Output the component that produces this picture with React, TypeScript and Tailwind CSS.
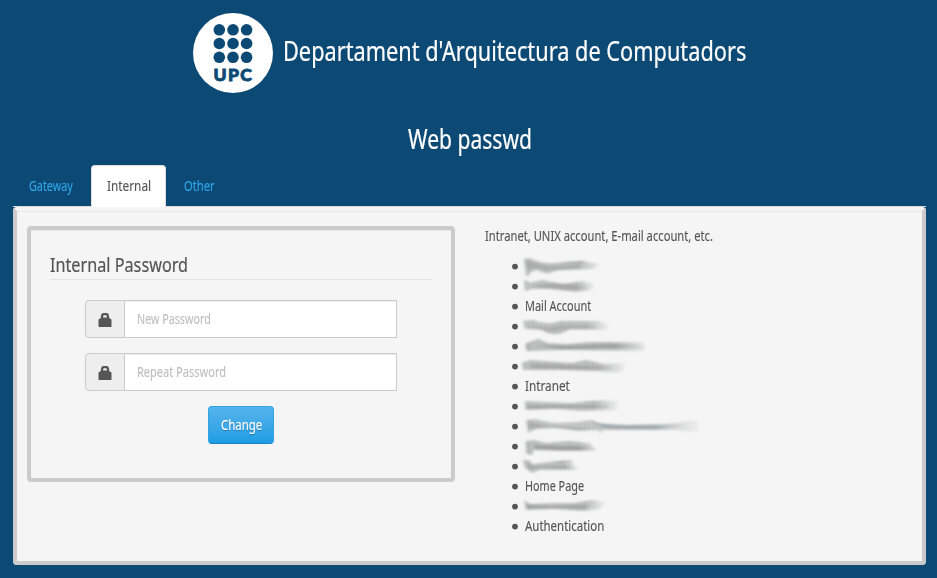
import { useLayoutEffect, useRef } from "react";

type FitProps = { width: number; className?: string; children: string };

/* Condensed text: squeezes a normal-width face into the given width. */
function Fit({ width, className = "", children }: FitProps) {
  const ref = useRef<HTMLSpanElement>(null);
  useLayoutEffect(() => {
    const el = ref.current;
    if (el) el.style.transform = `scaleX(${width / el.offsetWidth})`;
  }, [width]);
  return (
    <span className="inline-block whitespace-nowrap" style={{ width }}>
      <span ref={ref} className={`inline-block origin-left ${className}`}>
        {children}
      </span>
    </span>
  );
}

type Stroke = { d: string; o: number; c?: string };
type Item = { text: string; width: number } | { strokes: Stroke[] };

const items: Item[] = [
  {
    strokes: [
      { d: "M4 3Q10 1 16 5Q28 9 44 6L62 5L80 8L74 13L46 14Q34 14 30 17Q23 18 17 14L11 16L8 20L6 20Z", o: 0.42 },
      { d: "M6 4L14 7L30 11L60 9L60 12L30 14L14 12L7 14Z", o: 0.26 },
      { d: "M40 7L66 5L61 7Z", o: 0.45 },
    ],
  },
  {
    strokes: [
      { d: "M4 5L7 4L9 7L22 4L43 8L62 5L75 8L72 14L56 16L30 13L12 13L5 15Z", o: 0.4 },
      { d: "M12 10L34 7L66 9L68 14L50 14L26 12Z", o: 0.3 },
    ],
  },
  { text: "Mail Account", width: 66.5 },
  {
    strokes: [
      { d: "M3 5L13 4Q26 10 40 5L78 5L89 9L87 14L50 13Q42 19 34 18Q27 18 22 14L5 13Z", o: 0.4 },
      { d: "M5 9L26 11L42 9L76 9L76 13L42 14L30 16Z", o: 0.22 },
    ],
  },
  {
    strokes: [
      { d: "M6 7L18 3L28 7L46 8L70 6L122 6L127 12L124 15L44 14L7 15Z", o: 0.42 },
      { d: "M16 9L50 10L90 8L122 9L122 12L86 12L40 13Z", o: 0.42 },
      { d: "M6 8L8 8L9 14L6 14Z", o: 0.4 },
    ],
  },
  {
    strokes: [
      { d: "M2 7L10 4L52 7L66 4L84 8L105 7L104 15L70 15L40 14L3 14Z", o: 0.42 },
      { d: "M10 8L44 9L90 11L92 13L50 13L12 12Z", o: 0.33 },
      { d: "M30 16L33 16L32 17Z M76 16L100 15L99 17Z", o: 0.4 },
    ],
  },
  { text: "Intranet", width: 44.5 },
  {
    strokes: [
      { d: "M5 5L50 7L72 5L99 5L97 14L60 15L36 13L5 14Z", o: 0.38 },
      { d: "M6 9L40 9L88 9L89 12L34 12L8 13Z", o: 0.36 },
      { d: "M60 6L90 4L80 7Z", o: 0.25 },
    ],
  },
  {
    strokes: [
      { d: "M6 4L14 3L34 7L58 6L72 4L80 8L110 9L146 8L179 4L178 16L154 14L128 14L100 14L76 14L60 15L36 12L16 13L8 17Z", o: 0.36 },
      { d: "M8 5L28 10L72 12L56 14L28 11L8 13Z", o: 0.3 },
      { d: "M72 6L96 9L120 9L164 9L140 13L104 13L84 12Z", o: 0.45, c: "#7a8f98" },
      { d: "M76 11L84 17L80 16Z", o: 0.4 },
    ],
  },
  {
    strokes: [
      { d: "M6 5L14 4L26 7L48 5L70 7L78 15L42 15L14 14L12 19L7 18Z", o: 0.42 },
      { d: "M14 9L40 10L70 10L76 14L34 14L15 13Z", o: 0.42 },
      { d: "M6 6L8 6L8 18L6 18Z", o: 0.3 },
    ],
  },
  {
    strokes: [
      { d: "M3 4L9 4L13 8L28 6L52 4L54 10L60 14L36 14L20 14L12 17L5 12Z", o: 0.38 },
      { d: "M5 6L14 10L46 9L54 13L22 12L9 14Z", o: 0.3 },
      { d: "M30 6L52 4.5L40 7Z", o: 0.4 },
    ],
  },
  { text: "Home Page", width: 59 },
  {
    strokes: [
      { d: "M4 4L10 8L34 7L54 7L72 4L86 6L80 13L64 15L34 13L6 14Z", o: 0.4 },
      { d: "M6 8L30 10L58 9L74 9L64 13L30 12L7 13Z", o: 0.36 },
      { d: "M60 7L78 5L72 7Z", o: 0.35 },
    ],
  },
  { text: "Authentication", width: 79 },
];

/* Smeared-out list entry that thins out to the right, with a fine vertical grain. */
function Smudge({ strokes }: { strokes: Stroke[] }) {
  return (
    <svg className="block h-5 w-[180px] overflow-visible" viewBox="0 0 180 20">
      <g mask="url(#trail)">
        <g filter="url(#soften)">
          {strokes.map((s, i) => (
            <path key={i} d={s.d} fill={s.c ?? "#777a7a"} fillOpacity={s.o} />
          ))}
        </g>
        <path d={strokes[0].d} fill="url(#grain)" filter="url(#fine)" />
      </g>
    </svg>
  );
}

function Logo() {
  const at = [26.3, 40, 53.6];
  return (
    <svg className="size-20 shrink-0" viewBox="0 0 80 80">
      <circle cx="40" cy="40" r="40" fill="#fff" />
      {[16.8, 30.5, 44.3].map((y) =>
        at.map((x) => <circle key={`${x}-${y}`} cx={x} cy={y} r="5.8" fill="#0c4a75" />)
      )}
      <text
        x="20.6"
        y="67.8"
        textLength="38.2"
        className="font-['Lato',sans-serif] text-[17.5px] font-black"
        fill="#0c4a75"
        stroke="#0c4a75"
        strokeWidth="0.9"
      >
        UPC
      </text>
    </svg>
  );
}

function PasswordField({ label, width }: { label: string; width: number }) {
  return (
    <label className="mx-auto flex h-[38px] w-[312px]">
      <span className="flex w-10 items-center justify-center rounded-l border border-[#cbcbcb] bg-[#eee] pt-px pr-px">
        <svg className="size-[14px]" viewBox="0 0 14 14">
          <path
            d="M2.8 5V4Q3 0 5.5 0H8.5Q11 0 11.2 4V5L13.5 6.5V13.5L13 14H1L.5 13.5V6.5ZM5.2 4.6H8.8V3.2Q8.8 2.2 8 2.2H6Q5.2 2.2 5.2 3.2Z"
            fill="#555"
            fillRule="evenodd"
          />
        </svg>
      </span>
      <span className="flex flex-1 items-center border border-l-0 border-[#cbcbcb] bg-white pb-0.5 pl-3 text-[#bfbfbf] shadow-[inset_0_1px_1px_rgba(0,0,0,0.075)]">
        <Fit width={width}>{label}</Fit>
      </span>
    </label>
  );
}

export default function App() {
  return (
    <div className="h-[578px] w-[937px] overflow-hidden bg-[#0c4a75] px-[13px] pt-[13px] font-['Noto_Sans','Open_Sans',sans-serif] text-[14.5px] leading-5 text-[#555] [-webkit-text-stroke:0.15px_currentColor]">
      <svg className="absolute size-0">
        <defs>
          <filter id="soften" x="-10%" y="-30%" width="120%" height="160%">
            <feGaussianBlur stdDeviation="1.8 1.1" />
          </filter>
          <filter id="fine">
            <feGaussianBlur stdDeviation="0.4 1" />
          </filter>
          <pattern id="grain" width="2" height="20" patternUnits="userSpaceOnUse">
            <rect width="1" height="20" fill="#888" fillOpacity="0.12" />
          </pattern>
          <linearGradient id="fade">
            <stop offset="0.76" stopColor="#fff" />
            <stop offset="1" stopColor="#fff" stopOpacity="0.15" />
          </linearGradient>
          <mask
            id="trail"
            maskContentUnits="objectBoundingBox"
            x="-0.1"
            y="-0.3"
            width="1.2"
            height="1.6"
          >
            <rect x="-0.1" y="-0.3" width="1.1" height="1.6" fill="url(#fade)" />
          </mask>
        </defs>
      </svg>

      <header className="flex h-20 pl-[180px] text-[26.5px] leading-10 text-white [-webkit-text-stroke:0.2px_currentColor]">
        <Logo />
        <h1 className="ml-[9.5px] pt-[18px]">
          <Fit width={463.5}>Departament d'Arquitectura de Computadors</Fit>
        </h1>
      </header>
      <h2 className="mt-[26px] h-[46px] pl-[394.5px] text-[26.5px] leading-10 text-white [-webkit-text-stroke:0.2px_currentColor]">
        <Fit width={124}>Web passwd</Fit>
      </h2>

      <nav className="flex h-[41px] text-[#2fa4e7]">
        <a className="w-[78px] pt-[10px] pl-4">
          <Fit width={44}>Gateway</Fit>
        </a>
        <a className="-mb-px h-[42px] w-[75px] rounded-t border border-b-0 border-[#ddd] bg-white pt-[9px] pl-[15px] text-[#555]">
          <Fit width={44}>Internal</Fit>
        </a>
        <a className="pt-[10px] pl-[18px]">
          <Fit width={31}>Other</Fit>
        </a>
      </nav>

      <div className="h-px w-[913px] bg-[#ddd]">
        <div className="ml-[78px] h-px w-[75px] bg-white" />
      </div>
      <main className="flex h-[358px] w-[913px] rounded border-4 border-[#cbcbcb] border-t-[#f5f5f5] bg-[#f5f5f5] pl-[10px] shadow-[inset_0_1px_1px_rgba(0,0,0,0.05)]">
        <section className="mt-[15px] h-[256px] w-[428px] rounded border-4 border-[#cbcbcb] px-[19px] pt-[22px] shadow-[inset_0_1px_1px_rgba(0,0,0,0.05)]">
          <h3 className="mb-5 h-7 border-b border-[#e5e5e5] text-[19.5px] leading-[26px] [-webkit-text-stroke:0.2px_currentColor]">
            <Fit width={138}>Internal Password</Fit>
          </h3>
          <div className="flex flex-col gap-[15px]">
            <PasswordField label="New Password" width={74} />
            <PasswordField label="Repeat Password" width={89} />
            <button className="mx-auto flex h-[38px] w-[66px] items-center justify-center rounded border border-[#2fa4e7] border-b-[#1684c2] bg-linear-to-b from-[#54b4eb] to-[#1d9ce5] pb-0.5 text-white [text-shadow:0_1px_1px_rgba(0,0,0,0.3)]">
              <Fit width={41}>Change</Fit>
            </button>
          </div>
        </section>

        <section className="ml-[30px] pt-[14px]">
          <p className="h-[31px]">
            <Fit width={228}>Intranet, UNIX account, E-mail account, etc.</Fit>
          </p>
          <ul className="pl-[26.5px]">
            {items.map((item, i) => (
              <li key={i} className="flex h-5 items-center">
                <svg className="h-5 w-1.5 shrink-0" viewBox="0 0 6 20">
                  <circle cx="3" cy="10.6" r="2.9" fill="#555" />
                </svg>
                {"text" in item ? (
                  <span className="pb-0.5 pl-[7.5px]">
                    <Fit width={item.width}>{item.text}</Fit>
                  </span>
                ) : (
                  <span className="pl-[2.5px]">
                    <Smudge strokes={item.strokes} />
                  </span>
                )}
              </li>
            ))}
          </ul>
        </section>
      </main>
    </div>
  );
}
